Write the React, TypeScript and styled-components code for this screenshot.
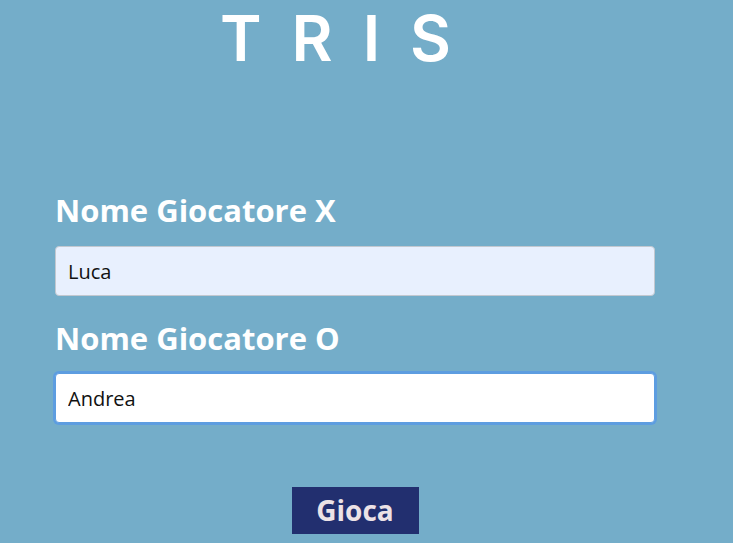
import React from "react";
import styled, { createGlobalStyle } from "styled-components";

const Global = createGlobalStyle`
  html, body { margin: 0; padding: 0; background: #74adc9; }
  body { font-family: "Open Sans", "Noto Sans", sans-serif; }
  * { box-sizing: border-box; }
`;

const Page = styled.div`
  width: 733px;
  height: 543px;
  background: #74adc9;
  padding-left: 55px;
  overflow: hidden;
`;

const Container = styled.div`
  width: 600px;
  display: flex;
  flex-direction: column;
`;

const Title = styled.h1`
  margin: 0;
  padding-right: 9px;
  height: 76px;
  font-family: Inter, "Open Sans", sans-serif;
  font-size: 63px;
  line-height: normal;
  font-weight: 600;
  letter-spacing: 30px;
  color: #ffffff;
  text-align: center;
  white-space: nowrap;
`;

const Form = styled.form`
  margin-top: 114px;
  display: flex;
  flex-direction: column;
`;

const Label = styled.label`
  font-size: 31px;
  font-weight: 700;
  color: #ffffff;
  line-height: 40px;
  margin-bottom: 16px;
`;

const Input = styled.input<{ $focused?: boolean; $autofill?: boolean }>`
  width: 600px;
  height: 50px;
  padding: 0 12px;
  font-family: inherit;
  font-size: 20px;
  color: #111;
  border-radius: 4px;
  border: 1px solid ${(p) => (p.$focused ? "#5d9de0" : "#c2c8d0")};
  background: ${(p) => (p.$autofill ? "#e8f0fe" : "#ffffff")};
  box-shadow: ${(p) => (p.$focused ? "0 0 0 2px #5d9de0" : "none")};
  outline: none;
  margin-bottom: 22px;
`;

const SecondLabel = styled(Label)`
  margin-bottom: 15px;
`;

const ButtonRow = styled.div`
  display: flex;
  justify-content: center;
  margin-top: 42px;
`;

const Button = styled.button`
  width: 127px;
  height: 47px;
  padding: 0;
  border: none;
  background: #222f6f;
  color: #ece2e6;
  font-family: inherit;
  font-size: 28px;
  font-weight: 700;
  line-height: 47px;
  cursor: pointer;
`;

export default function App() {
  return (
    <Page>
      <Global />
      <Container>
        <Title>TRIS</Title>
        <Form onSubmit={(e) => e.preventDefault()}>
          <Label htmlFor="px">Nome Giocatore X</Label>
          <Input id="px" defaultValue="Luca" $autofill />
          <SecondLabel htmlFor="po">Nome Giocatore O</SecondLabel>
          <Input id="po" defaultValue="Andrea" $focused />
          <ButtonRow>
            <Button type="submit">Gioca</Button>
          </ButtonRow>
        </Form>
      </Container>
    </Page>
  );
}
